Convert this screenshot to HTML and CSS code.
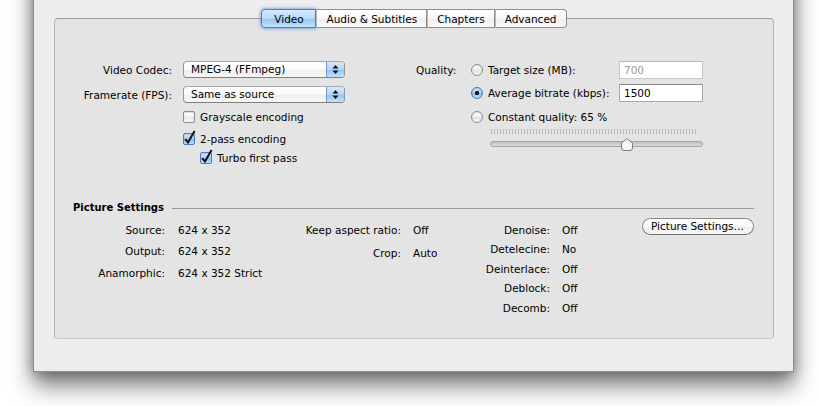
FILE: index.html
```html
<!DOCTYPE html>
<html lang="en">

<head>
    <meta charset="UTF-8">
    <title>Video</title>
    <link rel="stylesheet" href="styles.css">
</head>

<body>
    <div class="window">
        <div class="tabs">
            <span class="tab tab-video active">Video</span>
            <span class="tab">Audio &amp; Subtitles</span>
            <span class="tab">Chapters</span>
            <span class="tab">Advanced</span>
        </div>

        <div class="tabbox">
            <div class="settings">
                <!-- codec / framerate -->
                <div class="col-left">
                    <div class="field-row">
                        <span class="label">Video Codec:</span>
                        <span class="popup"><span class="popup-text">MPEG-4 (FFmpeg)</span><span class="arrows"><svg width="7" height="11" viewBox="0 0 7 11"><path d="M3.5 1 L6.5 4.5 H0.5 Z M3.5 10 L6.5 6.5 H0.5 Z" fill="#111"/></svg></span></span>
                    </div>
                    <div class="field-row row-gap">
                        <span class="label">Framerate (FPS):</span>
                        <span class="popup"><span class="popup-text">Same as source</span><span class="arrows"><svg width="7" height="11" viewBox="0 0 7 11"><path d="M3.5 1 L6.5 4.5 H0.5 Z M3.5 10 L6.5 6.5 H0.5 Z" fill="#111"/></svg></span></span>
                    </div>
                    <div class="check-row grayscale">
                        <span class="checkbox"></span>Grayscale encoding
                    </div>
                    <div class="check-row twopass">
                        <span class="checkbox checked"><svg width="12" height="12" viewBox="0 0 12 12"><path d="M2.2 6.2 L5 9.6 L11.6 -2" fill="none" stroke="#111" stroke-width="2"/></svg></span>2-pass encoding
                    </div>
                    <div class="check-row turbo">
                        <span class="checkbox checked"><svg width="12" height="12" viewBox="0 0 12 12"><path d="M2.2 6.2 L5 9.6 L11.6 -2" fill="none" stroke="#111" stroke-width="2"/></svg></span>Turbo first pass
                    </div>
                </div>

                <!-- quality -->
                <div class="col-right">
                    <div class="quality-row">
                        <span class="q-label">Quality:</span>
                        <span class="radio"></span>
                        <span class="radio-text">Target size (MB):</span>
                        <span class="textfield disabled">700</span>
                    </div>
                    <div class="quality-row indent second">
                        <span class="radio selected"></span>
                        <span class="radio-text">Average bitrate (kbps):</span>
                        <span class="textfield">1500</span>
                    </div>
                    <div class="quality-row indent third">
                        <span class="radio"></span>
                        <span class="radio-text">Constant quality: 65 %</span>
                    </div>
                    <div class="slider">
                        <div class="ticks"></div>
                        <div class="track"></div>
                        <svg class="thumb" width="12" height="13" viewBox="0 0 12 13"><path d="M6 0.5 L11.5 5 V10 Q11.5 12.5 9 12.5 H3 Q0.5 12.5 0.5 10 V5 Z" fill="#f4f4f4" stroke="#7d7d7d"/></svg>
                    </div>
                </div>
            </div>

            <div class="section-head">
                <span>Picture Settings</span>
                <span class="rule"></span>
            </div>

            <div class="picture">
                <div class="info info-a">
                    <span class="k">Source:</span><span>624 x 352</span>
                    <span class="k">Output:</span><span>624 x 352</span>
                    <span class="k">Anamorphic:</span><span>624 x 352 Strict</span>
                </div>
                <div class="info info-b">
                    <span class="k">Keep aspect ratio:</span><span>Off</span>
                    <span class="k">Crop:</span><span>Auto</span>
                </div>
                <div class="info info-c">
                    <span class="k">Denoise:</span><span>Off</span>
                    <span class="k">Detelecine:</span><span>No</span>
                    <span class="k">Deinterlace:</span><span>Off</span>
                    <span class="k">Deblock:</span><span>Off</span>
                    <span class="k">Decomb:</span><span>Off</span>
                </div>
                <span class="pill-button">Picture Settings…</span>
            </div>
        </div>
    </div>
</body>

</html>
```

FILE: styles.css
```css
html {
    background-color: #fff;
}

body {
    margin: 0;
    height: 406px;
    font-family: "DejaVu Sans", sans-serif;
    font-size: 10.5px;
    color: #000;
}

.window {
    margin: -40px 0 0 33px;
    width: 761px;
    box-sizing: border-box;
    padding: 49px 0 32px 20px;
    background-color: #ededed;
    border: 1px solid #8f8f8f;
    border-top: none;
    box-shadow: 0 14px 22px rgba(0, 0, 0, 0.5), 0 2px 12px rgba(0, 0, 0, 0.28);
}

/* tabs */
.tabs {
    display: flex;
    justify-content: center;
    position: relative;
    z-index: 1;
    width: 720px;
    height: 19px;
}

.tab {
    height: 19px;
    box-sizing: border-box;
    padding: 0 9px;
    display: flex;
    align-items: center;
    justify-content: center;
    border: 1px solid #8c8c8c;
    border-left: 1px solid #b9b9b9;
    background: linear-gradient(#ffffff, #f7f7f7 50%, #eeeeee 51%, #fafafa);
}

.tab:first-child {
    border-left-color: #8c8c8c;
    border-radius: 4px 0 0 4px;
}

.tab:last-child {
    border-radius: 0 4px 4px 0;
}

.tab-video {
    min-width: 55px;
}

.tab.active {
    background: linear-gradient(#d8ebfd, #b6d9f8 50%, #8cc4f4 51%, #c4e4fc);
    border-color: #4c7dc4;
    box-shadow: 0 0 3px 1px rgba(80, 140, 225, 0.65);
}

.tabbox {
    margin-top: -10px;
    width: 720px;
    height: 321px;
    box-sizing: border-box;
    background-color: #e4e4e4;
    border: 1px solid #b5b5b5;
    border-top-color: #9c9c9c;
    border-bottom-color: #cacaca;
    border-radius: 4px;
}

.settings {
    display: flex;
    padding-top: 42px;
}

/* left column */
.field-row {
    display: flex;
    align-items: center;
    height: 17px;
}

.row-gap {
    margin-top: 8px;
}

.label {
    width: 117px;
    margin-right: 11px;
    text-align: right;
}

.popup {
    width: 162px;
    height: 17px;
    box-sizing: border-box;
    display: flex;
    border: 1px solid #949494;
    border-top-color: #a9a9a9;
    border-bottom-color: #7f7f7f;
    border-radius: 4px;
    background: linear-gradient(#ffffff, #f9f9f9 50%, #efefef 51%, #f6f6f6);
    overflow: hidden;
}

.popup-text {
    flex: 1;
    padding-left: 7px;
    line-height: 15px;
}

.arrows {
    width: 17px;
    display: flex;
    align-items: center;
    justify-content: center;
    border-left: 1px solid #7794c4;
    background: linear-gradient(#d6eafd, #b1d6f8 50%, #8dc3f4 51%, #c2e2fb);
}

.check-row {
    display: flex;
    align-items: center;
    height: 14px;
    padding-left: 128px;
}

.grayscale {
    margin-top: 7px;
}

.twopass {
    margin-top: 8px;
}

.turbo {
    margin-top: 5px;
    padding-left: 145px;
}

.checkbox {
    width: 12px;
    height: 12px;
    box-sizing: border-box;
    margin-right: 5px;
    border: 1px solid #8a8a8a;
    border-radius: 2px;
    background: linear-gradient(#fefefe, #f2f2f2 50%, #e6e6e6 51%, #f8f8f8);
    box-shadow: inset 0 1px 1px rgba(0, 0, 0, 0.12);
}

.checkbox.checked {
    border-color: #5479b4;
    background: linear-gradient(#d0e7fc, #a9d2f7 50%, #82bdf3 51%, #bfe0fb);
}

.checkbox svg {
    display: block;
    margin: -1px 0 0 -1px;
    overflow: visible;
}

/* right column */
.col-right {
    margin-left: 71px;
}

.quality-row {
    display: flex;
    align-items: center;
    height: 18px;
}

.indent {
    padding-left: 55px;
}

.second {
    margin-top: 5px;
}

.third {
    margin-top: 6px;
}

.q-label {
    width: 55px;
}

.radio {
    width: 12px;
    height: 12px;
    box-sizing: border-box;
    margin-right: 5px;
    border: 1px solid #8b8b8b;
    border-radius: 50%;
    background: linear-gradient(#fdfdfd, #f0f0f0 50%, #e2e2e2 51%, #f7f7f7);
    box-shadow: inset 0 1px 1px rgba(0, 0, 0, 0.1);
}

.radio.selected {
    border-color: #4f74b0;
    background: radial-gradient(circle, #151515 0, #151515 1.8px, transparent 2.4px), linear-gradient(#cfe6fc, #a6d0f7 50%, #7fbbf3 51%, #bde0fb);
}

.radio-text {
    width: 131px;
}

.textfield {
    width: 84px;
    height: 18px;
    box-sizing: border-box;
    padding-left: 4px;
    line-height: 16px;
    background-color: #fff;
    border: 1px solid #a9a9a9;
    border-top-color: #8a8a8a;
}

.textfield.disabled {
    color: #9a9a9a;
    border-color: #c8c8c8;
    border-top-color: #b5b5b5;
}

.slider {
    position: relative;
    margin: 2px 0 0 74px;
    width: 213px;
    height: 24px;
}

.ticks {
    margin: 3px 0 0 1px;
    width: 207px;
    height: 5px;
    background: repeating-linear-gradient(90deg, #b9b9b9 0, #b9b9b9 1px, transparent 1px, transparent 3px);
}

.track {
    margin-top: 7px;
    height: 4px;
    border: 1px solid #a6a6a6;
    border-radius: 3px;
    background: linear-gradient(#bdbdbd, #dcdcdc);
}

.thumb {
    position: absolute;
    left: 131px;
    top: 9px;
}

/* picture settings */
.section-head {
    display: flex;
    align-items: center;
    height: 14px;
    margin: 35px 19px 0 18px;
    font-weight: bold;
    font-size: 10px;
}

.rule {
    flex: 1;
    height: 1px;
    margin: 2px 0 0 8px;
    background-color: #9a9a9a;
}

.picture {
    display: flex;
    align-items: flex-start;
    padding-left: 18px;
}

.info {
    display: grid;
    align-items: center;
}

.k {
    text-align: right;
}

.info-a {
    grid-template-columns: 92px 120px;
    grid-auto-rows: 21.5px;
    column-gap: 13px;
    padding-top: 5px;
}

.info-b {
    grid-template-columns: 103px 60px;
    grid-auto-rows: 23px;
    column-gap: 12px;
    padding-top: 4.5px;
}

.info-c {
    grid-template-columns: 77px 80px;
    grid-auto-rows: 19.5px;
    column-gap: 12px;
    padding-top: 6px;
}

.pill-button {
    margin-top: 4px;
    width: 112px;
    height: 17px;
    box-sizing: border-box;
    padding-left: 8px;
    line-height: 15px;
    border: 1px solid #8a8a8a;
    border-bottom-color: #6f6f6f;
    border-radius: 9px;
    background: linear-gradient(#ffffff, #f8f8f8 50%, #ededed 51%, #f7f7f7);
}
```
